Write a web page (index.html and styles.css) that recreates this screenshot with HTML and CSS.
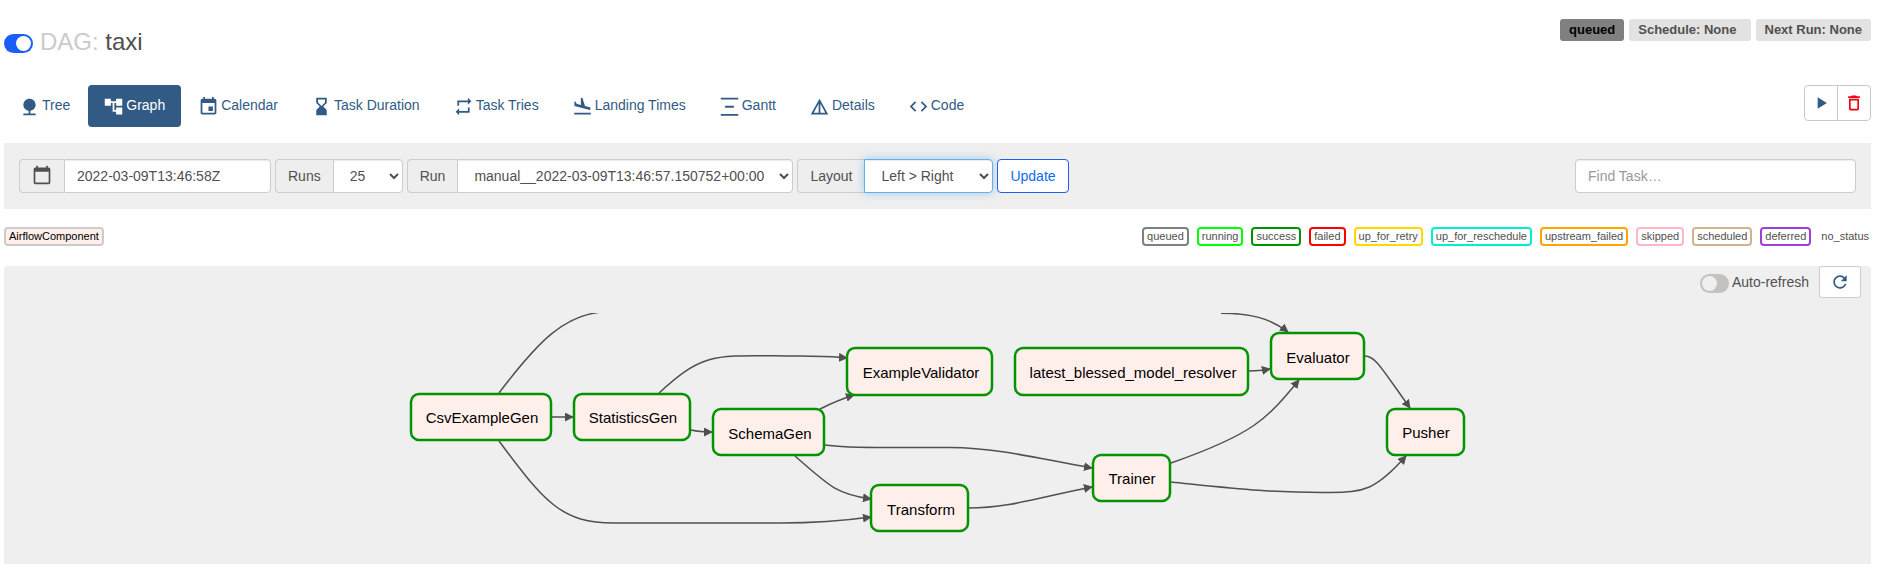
FILE: index.html
```html
<!DOCTYPE html>
<html lang="en">
<head>
<meta charset="utf-8">
<title>taxi - Graph</title>
<link rel="stylesheet" href="styles.css">
</head>
<body>
<main class="page">
  <header class="header">
    <h3 class="title">
      <label class="switch"><input type="checkbox" role="switch" aria-label="Pause or unpause DAG" checked><span class="switch-track"></span></label>
      <span><span class="title-muted">DAG:</span> taxi</span>
    </h3>
    <div class="labels">
      <a class="label label-queued" href="#">queued</a>
      <a class="label label-wide" href="#">Schedule: None</a>
      <span class="label">Next Run: None</span>
    </div>
  </header>

  <div class="nav-row">
    <nav class="tabs">
      <a class="tab" href="#"><svg class="icon" viewBox="0 0 24 24"><path d="M13 16.920c3.390-.49 6-3.390 6-6.920 0-3.870-3.130-7-7-7s-7 3.130-7 7c0 3.530 2.610 6.430 6 6.920V20H5v2h14v-2h-6z"/></svg>Tree</a>
      <a class="tab tab-active" href="#" aria-current="page"><svg class="icon" viewBox="0 0 24 24"><path d="M22 11V3h-7v3H9V3H2v8h7V8h2v10h4v3h7v-8h-7v3h-2V8h2v3z"/></svg>Graph</a>
      <a class="tab" href="#"><svg class="icon" viewBox="0 0 24 24"><path d="M17 12h-5v5h5v-5zM16 1v2H8V1H6v2H5c-1.110 0-1.990.9-1.990 2L3 19c0 1.100.890 2 2 2h14c1.100 0 2-.9 2-2V5c0-1.100-.9-2-2-2h-1V1h-2zm3 18H5V8h14v11z"/></svg>Calendar</a>
      <a class="tab" href="#"><svg class="icon" viewBox="0 0 24 24"><path d="M18 22l-.01-6L14 12l3.990-4.010L18 2H6v6l4 4-4 3.990V22h12zM8 7.500V4h8v3.500l-4 4-4-4z"/></svg>Task Duration</a>
      <a class="tab" href="#"><svg class="icon" viewBox="0 0 24 24"><path d="M7 7h10v3l4-4-4-4v3H5v6h2V7zm10 10H7v-3l-4 4 4 4v-3h12v-6h-2v4z"/></svg>Task Tries</a>
      <a class="tab" href="#"><svg class="icon" viewBox="0 0 24 24"><path d="M2.500 19h19v2h-19zM19.340 15.850c.8.210 1.620-.26 1.840-1.060.21-.8-.26-1.620-1.060-1.840l-5.310-1.420-2.760-9.020L10.120 2v8.280L5.150 8.950l-.93-2.320-1.450-.39v5.170l16.570 4.440z"/></svg>Landing Times</a>
      <a class="tab" href="#"><svg class="icon" viewBox="0 0 24 24"><path d="M2 2h20v2H2zM2 20.500h20v2H2zM7 11h10v2.500H7z"/></svg>Gantt</a>
      <a class="tab" href="#"><svg class="icon" viewBox="0 0 24 24"><path d="M12 3L2 21h20L12 3zm1 5.920L18.600 19H13V8.920zm-2 0V19H5.400L11 8.920z"/></svg>Details</a>
      <a class="tab" href="#"><svg class="icon" viewBox="0 0 24 24"><path d="M9.400 16.600L4.800 12l4.600-4.600L8 6l-6 6 6 6 1.400-1.400zm5.200 0l4.600-4.600-4.600-4.600L16 6l6 6-6 6-1.400-1.400z"/></svg>Code</a>
    </nav>
    <div class="actions">
      <button class="action" type="button" aria-label="Trigger DAG"><svg class="icon-small" viewBox="0 0 24 24"><path d="M8 5v14l11-7z"/></svg></button>
      <button class="action action-delete" type="button" aria-label="Delete DAG"><svg class="icon-small" viewBox="0 0 24 24"><path d="M6 19c0 1.100.9 2 2 2h8c1.100 0 2-.9 2-2V7H6v12zM8 9h8v10H8V9zm7.500-5l-1-1h-5l-1 1H5v2h14V4z"/></svg></button>
    </div>
  </div>

  <form class="filters">
    <div class="group">
      <label class="addon addon-icon" for="base-date" aria-label="Base date"><svg class="icon-small" viewBox="0 0 24 24"><path d="M20 3h-1V1h-2v2H7V1H5v2H4c-1.100 0-2 .9-2 2v16c0 1.100.9 2 2 2h16c1.100 0 2-.9 2-2V5c0-1.100-.9-2-2-2zm0 18H4V8h16v13z"/></svg></label>
      <input class="control control-date" id="base-date" type="text" value="2022-03-09T13:46:58Z">
    </div>
    <div class="group">
      <label class="addon" for="runs">Runs</label>
      <select class="control" id="runs"><option>5</option><option selected>25</option><option>50</option><option>100</option><option>365</option></select>
    </div>
    <div class="group">
      <label class="addon" for="run">Run</label>
      <select class="control" id="run"><option>manual__2022-03-09T13:46:57.150752+00:00</option></select>
    </div>
    <div class="group">
      <label class="addon" for="layout">Layout</label>
      <select class="control control-focus" id="layout"><option>Left &gt; Right</option><option>Right &gt; Left</option><option>Top &gt; Bottom</option><option>Bottom &gt; Top</option></select>
    </div>
    <button class="update" type="button">Update</button>
    <input class="control search" type="search" placeholder="Find Task…" aria-label="Find Task">
  </form>

  <div class="legend">
    <span class="tag tag-operator">AirflowComponent</span>
    <div class="states">
      <span class="tag tag-queued">queued</span>
      <span class="tag tag-running">running</span>
      <span class="tag tag-success">success</span>
      <span class="tag tag-failed">failed</span>
      <span class="tag tag-retry">up_for_retry</span>
      <span class="tag tag-reschedule">up_for_reschedule</span>
      <span class="tag tag-upstream">upstream_failed</span>
      <span class="tag tag-skipped">skipped</span>
      <span class="tag tag-scheduled">scheduled</span>
      <span class="tag tag-deferred">deferred</span>
      <span class="tag tag-none">no_status</span>
    </div>
  </div>

  <section class="panel">
    <div class="refresh">
      <label class="switch switch-label"><input type="checkbox" role="switch"><span class="switch-track"></span>Auto-refresh</label>
      <button class="refresh-button" type="button" aria-label="Refresh"><svg class="icon-small" viewBox="0 0 24 24"><path d="M17.650 6.350C16.200 4.900 14.210 4 12 4c-4.420 0-7.990 3.580-7.990 8s3.570 8 7.990 8c3.730 0 6.840-2.550 7.730-6h-2.080c-.82 2.330-3.040 4-5.650 4-3.310 0-6-2.690-6-6s2.690-6 6-6c1.660 0 3.140.69 4.220 1.780L13 11h7V4l-2.350 2.350z"/></svg></button>
    </div>
    <svg class="graph" viewBox="400 313 1075 231" role="img" aria-label="Task graph">
      <defs>
        <marker id="arrow" viewBox="0 0 10 10" refX="9" refY="5" markerUnits="userSpaceOnUse" markerWidth="9" markerHeight="9" orient="auto"><path class="arrowhead" d="M0 0L10 5L0 10z"/></marker>
      </defs>
      <g class="edges">
        <path d="M499 393C540 339 564 317 598 312.500"/>
        <path d="M552 417H573"/>
        <path d="M499 441C545 503 562 523 614 523H780C820 523 842 521 871 517"/>
        <path d="M659 393C706 350 714 356 800 356C830 356 835 357 847 358"/>
        <path d="M691 430Q700 432 712 432"/>
        <path d="M820 409Q838 400 854 395"/>
        <path d="M825 445C850 449 890 447 950 447.500C1000 448 1040 459 1092 468"/>
        <path d="M795 456C830 487 837 494 871 499"/>
        <path d="M968 508C1010 508 1040 497 1092 487"/>
        <path d="M1221 313.200C1250 313.200 1270 318 1288 332"/>
        <path d="M1249 371Q1259 371 1270 369"/>
        <path d="M1171 463C1254 434 1267 419 1299 380"/>
        <path d="M1171 482C1230 488 1270 493 1330 492.500C1363 492 1375 491 1406 456"/>
        <path d="M1365 356C1375 356 1380 366 1410 408"/>
      </g>
      <g class="nodes">
        <rect x="411" y="394" width="140" height="46" rx="8"/><text x="482" y="423">CsvExampleGen</text>
        <rect x="574" y="394" width="116" height="46" rx="8"/><text x="633" y="423">StatisticsGen</text>
        <rect x="713" y="409" width="111" height="46" rx="8"/><text x="770" y="439">SchemaGen</text>
        <rect x="847" y="348" width="145" height="47" rx="8"/><text x="921" y="378">ExampleValidator</text>
        <rect x="1015" y="348" width="233" height="47" rx="8"/><text x="1133" y="378">latest_blessed_model_resolver</text>
        <rect x="871" y="485" width="97" height="46" rx="8"/><text x="921" y="515">Transform</text>
        <rect x="1093" y="455" width="77" height="46" rx="8"/><text x="1132" y="484">Trainer</text>
        <rect x="1271" y="333" width="93" height="46" rx="8"/><text x="1318" y="363">Evaluator</text>
        <rect x="1387" y="409" width="77" height="46" rx="8"/><text x="1426" y="438">Pusher</text>
      </g>
    </svg>
  </section>
</main>
</body>
</html>
```
FILE: styles.css
```css
* { box-sizing: border-box; }

body {
  margin: 0;
  background: #fff;
  color: #51504f;
  font: 14px/20px "Liberation Sans", Arial, sans-serif;
}

input, select, button { font: inherit; color: inherit; }
a { color: inherit; text-decoration: none; }
svg { display: block; fill: currentColor; }

.page {
  display: flex;
  flex-direction: column;
  min-height: 100vh;
  padding: 19px 12px 0 4px;
}

.header {
  display: flex;
  justify-content: space-between;
  align-items: flex-start;
  min-height: 66px;
}

.title {
  display: flex;
  align-items: center;
  gap: 7px;
  margin: 8px 0 0;
  font-size: 24px;
  line-height: 30px;
  font-weight: 400;
}
.title-muted { color: #cbcbcb; }

.switch { display: flex; align-items: center; cursor: pointer; }
.switch input { position: absolute; opacity: 0; }
.switch-track {
  width: 29px;
  height: 19px;
  margin-top: 3px;
  padding: 2px;
  border-radius: 10px;
  background: #c4c2c1;
}
.switch-track::before {
  content: "";
  display: block;
  width: 15px;
  height: 15px;
  border-radius: 50%;
  background: #efefef;
}
.switch input:checked + .switch-track { background: #1a5ff5; }
.switch input:checked + .switch-track::before { margin-left: 10px; background: #fff; }
.switch-label { gap: 3px; }

.labels { display: flex; gap: 5px; }
.label {
  padding: 0 9px;
  border-radius: 3px;
  background: #e2e2e2;
  font-size: 13px;
  line-height: 22px;
  font-weight: 700;
}
.label-queued { background: #808080; color: #000; }
.label-wide { padding-right: 14px; }

.nav-row {
  display: flex;
  justify-content: space-between;
  align-items: flex-start;
  margin-bottom: 16px;
}
.tabs { display: flex; gap: 2px; }
.tab {
  display: flex;
  align-items: flex-start;
  gap: 2px;
  padding: 10px 16px 10px 15px;
  border-radius: 4px;
  color: #315b84;
}
.tab-active { background: #315b84; color: #fff; }
.icon { width: 21px; height: 21px; margin-top: 1px; }
.icon-small { width: 20px; height: 20px; }

.actions { display: flex; }
.action {
  padding: 7px 6px;
  border: 1px solid #c9c9c9;
  border-radius: 4px 0 0 4px;
  background: #fff;
  color: #315b84;
}
.action-delete { margin-left: -1px; border-radius: 0 4px 4px 0; color: #ee0011; }

.filters {
  display: flex;
  gap: 4px;
  padding: 16px 15px;
  background: #efefef;
}
.group { display: flex; }
.addon {
  display: flex;
  align-items: center;
  padding: 0 12px;
  border: 1px solid #ccc;
  border-right: 0;
  border-radius: 4px 0 0 4px;
  background: #eee;
}
.addon-icon { padding-bottom: 2px; }
.control {
  height: 34px;
  padding: 6px 12px;
  border: 1px solid #ccc;
  border-radius: 4px;
  background-color: #fff;
  box-shadow: inset 0 1px 1px rgba(0, 0, 0, .08);
  outline: 0;
}
.group .control { border-radius: 0 4px 4px 0; }
.control-date { width: 207px; }
.group .control-focus {
  border-color: #66afe9;
  box-shadow: inset 0 1px 1px rgba(0, 0, 0, .08), 0 0 8px rgba(102, 175, 233, .6);
}
.update {
  padding: 0 12px;
  border: 1px solid #1a5ff5;
  border-radius: 4px;
  background: #fff;
  color: #0d6bf5;
}
.search { width: 281px; margin-left: auto; appearance: none; }
.search::placeholder { color: #999; }

.legend {
  display: flex;
  justify-content: space-between;
  padding: 18px 0 20px;
}
.states { display: flex; gap: 8px; }
.tag {
  padding: 0 3px;
  border: 2px solid #ccc;
  border-radius: 4px;
  font-size: 11px;
  line-height: 15px;
}
.tag-operator { background: #ffefeb; color: #000; }
.tag-queued { border-color: #808080; }
.tag-running { border-color: #00ff00; }
.tag-success { border-color: #009400; }
.tag-failed { border-color: #f00; }
.tag-retry { border-color: #ffd900; }
.tag-reschedule { border-color: #00eed1; }
.tag-upstream { border-color: #ffa500; }
.tag-skipped { border-color: #ffb6c8; }
.tag-scheduled { border-color: #d2b48c; }
.tag-deferred { border-color: #9f3fdb; }
.tag-none { padding: 0; border-color: transparent; }

.panel {
  flex: 1;
  border-radius: 4px 4px 0 0;
  background: #efefef;
}
.refresh {
  display: flex;
  justify-content: flex-end;
  align-items: center;
  gap: 10px;
  padding-right: 10px;
}
.refresh-button {
  padding: 5px 10px;
  border: 1px solid #ccc;
  border-radius: 3px;
  background: #fff;
  color: #315b84;
}
.graph { width: 1075px; max-width: 100%; margin: 15px auto 0; overflow: hidden; }
.edges path { fill: none; stroke: #51504f; stroke-width: 1.5; marker-end: url(#arrow); }
.edges path:first-child { marker-end: none; }
.arrowhead { fill: #51504f; }
.nodes rect { fill: #ffefeb; stroke: #009400; stroke-width: 2.5; }
.nodes text { fill: #000; font-size: 15px; text-anchor: middle; }
```
